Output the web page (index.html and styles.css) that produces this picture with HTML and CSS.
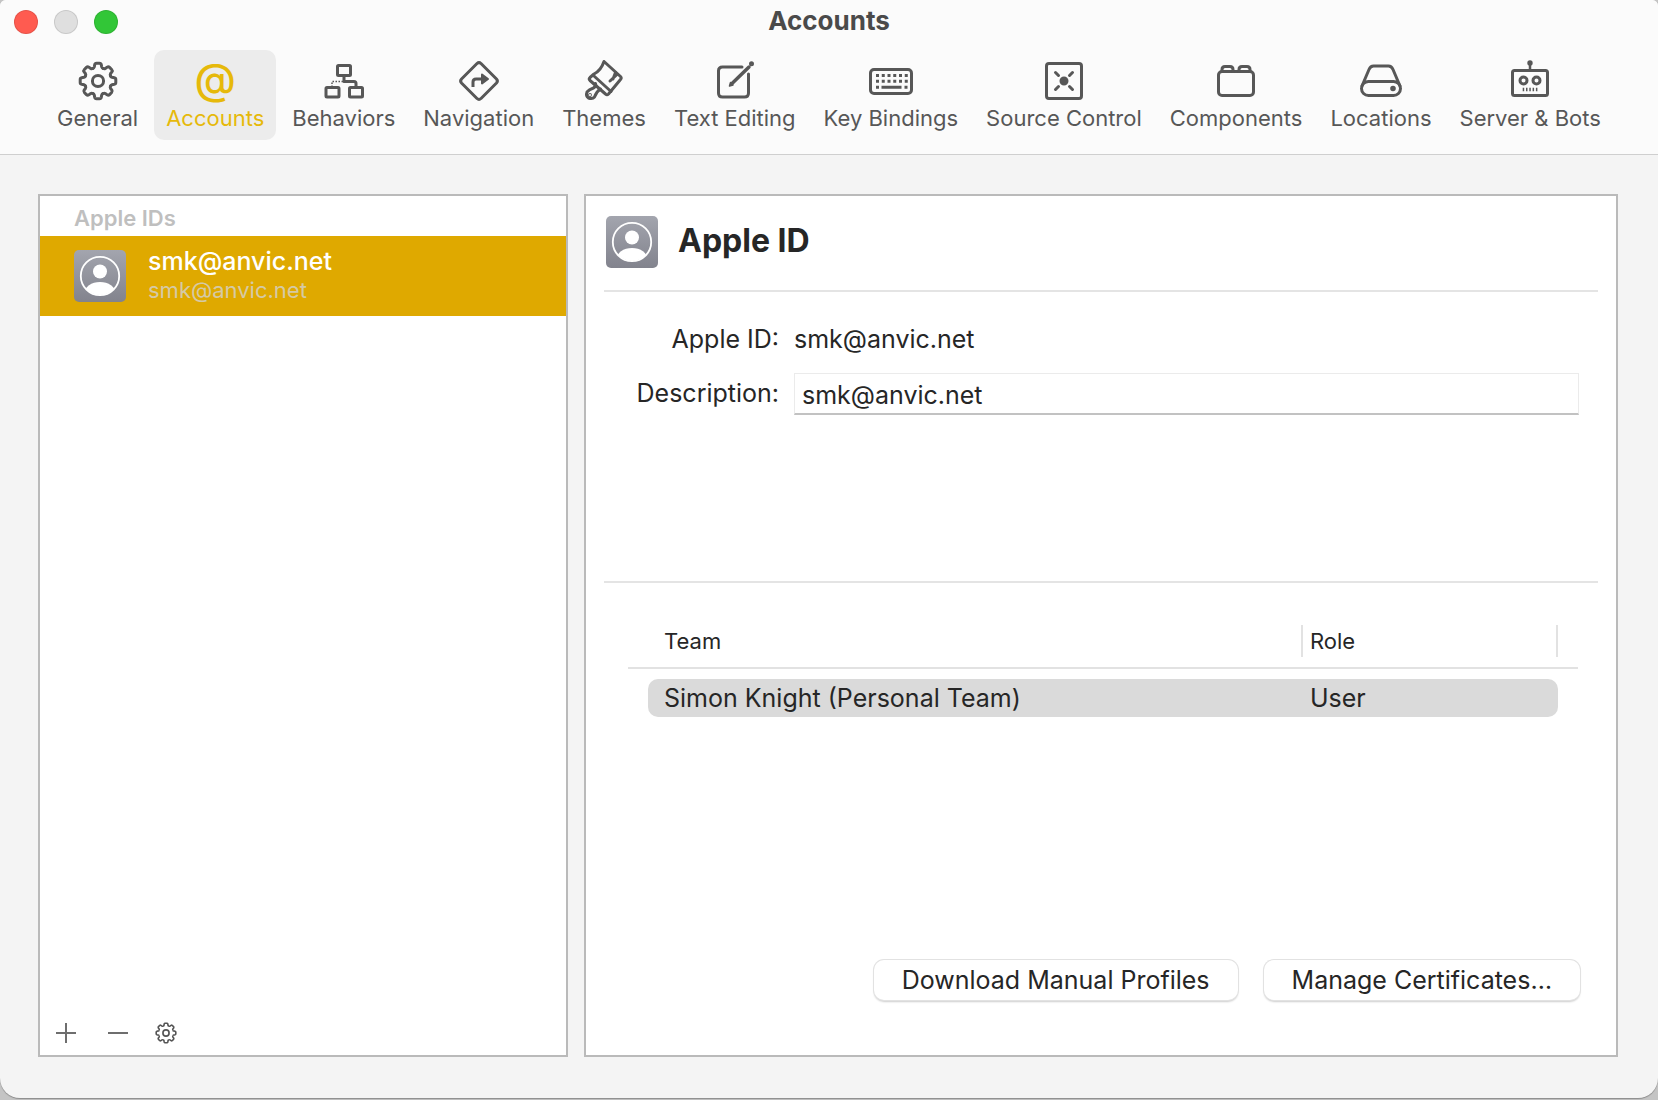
FILE: index.html
```html
<!DOCTYPE html>
<html lang="en">
<head>
<meta charset="utf-8">
<meta name="viewport" content="width=device-width, initial-scale=1">
<title>Accounts</title>
<link rel="stylesheet" href="styles.css">
</head>
<body>
<svg class="defs" aria-hidden="true">
  <defs>
    <path id="tooth" d="M-5.2-12.5C-4.2-12.8-3.9-13.2-3.7-14L-3.3-16.3Q-3-17.8-1.5-17.8H1.5Q3-17.8 3.3-16.3L3.7-14C3.9-13.2 4.2-12.8 5.2-12.5"/>
    <g id="gear">
      <use href="#tooth"/><use href="#tooth" transform="rotate(45)"/><use href="#tooth" transform="rotate(90)"/><use href="#tooth" transform="rotate(135)"/>
      <use href="#tooth" transform="rotate(180)"/><use href="#tooth" transform="rotate(225)"/><use href="#tooth" transform="rotate(270)"/><use href="#tooth" transform="rotate(315)"/>
      <circle r="5.6"/>
    </g>
    <linearGradient id="avatar-fill" x1="0" y1="0" x2="0" y2="1"><stop offset="0" stop-color="#a3a5ae"/><stop offset="1" stop-color="#82838d"/></linearGradient>
    <clipPath id="avatar-clip"><circle cx="26" cy="26" r="19"/></clipPath>
    <symbol id="avatar" viewBox="0 0 52 52">
      <rect width="52" height="52" rx="5" fill="url(#avatar-fill)"/>
      <circle cx="26" cy="21.5" r="7" fill="#fff"/>
      <ellipse cx="26" cy="43" rx="15.5" ry="11" fill="#fff" clip-path="url(#avatar-clip)"/>
      <circle cx="26" cy="26" r="19.2" fill="none" stroke="#fff" stroke-width="1.8"/>
    </symbol>
  </defs>
</svg>
<div class="window">
  <header class="header">
    <div class="titlebar">
      <div class="lights">
        <button class="light close" aria-label="Close"></button>
        <button class="light minimize" aria-label="Minimize" disabled></button>
        <button class="light zoom" aria-label="Zoom"></button>
      </div>
      <h1 class="title">Accounts</h1>
    </div>
    <nav class="toolbar" aria-label="Preferences">
      <button class="tab">
        <svg class="icon" viewBox="-22 -22 44 44"><use href="#gear"/></svg>
        <span>General</span>
      </button>
      <button class="tab active" aria-current="page">
        <span class="icon at" aria-hidden="true">@</span>
        <span>Accounts</span>
      </button>
      <button class="tab">
        <svg class="icon" viewBox="0 0 44 44"><rect x="15.5" y="6.5" width="13" height="10" rx="1"/><rect x="4" y="28.500" width="13" height="9.500" rx="1"/><rect x="27.500" y="28.500" width="13" height="9.500" rx="1"/><path d="M22 17v5.500h10q2 0 2 2v4"/><path d="M21 22.500H10v5" stroke-width="1.500" stroke-dasharray="1.500 1.500" stroke-linecap="butt"/></svg>
        <span>Behaviors</span>
      </button>
      <button class="tab">
        <svg class="icon" viewBox="0 0 44 44"><path d="M20 4.500q2-1.800 4 0L39.500 20q1.800 2 0 4L24 39.500q-2 1.800-4 0L4.500 24q-1.800-2 0-4Z"/><path d="M16 28v-5q0-3 3-3h7" stroke-linecap="butt"/><path d="M25 15.500 31 20l-6 4.500Z" class="solid" stroke-width="2"/></svg>
        <span>Navigation</span>
      </button>
      <button class="tab">
        <svg class="icon" viewBox="0 0 44 44"><path d="M22 2.500 38.500 17.500q1.500 1.500 0 3L26.500 35q-1.500 1.500-3 0L8 21.500q-1.500-1.500 0-3L12 15Q19 11.500 22 2.500Z"/><path d="M12 17l17 15.500M28 22l7-6.500M31 20l2.500-6.500"/><path d="M13.500 24.500q1 2.500-2 4.500-4.500 1.500-6.500 4-1.500 4 1.500 6 4 1.500 6-1 2-5.500 6-8"/><circle cx="8" cy="36" r=".4"/></svg>
        <span>Themes</span>
      </button>
      <button class="tab">
        <svg class="icon" viewBox="0 0 44 44"><path d="M29 8H9.500q-4 0-4 4v22q0 4 4 4h22q4 0 4-4V15"/><path d="M19 24.500 36 8" stroke-width="3.500"/><path d="m16.500 27 1-3.500 2.500 2.500Z" class="solid" stroke-width="1.500"/><circle cx="38.500" cy="4.800" r="1" class="solid"/></svg>
        <span>Text Editing</span>
      </button>
      <button class="tab">
        <svg class="icon" viewBox="0 0 44 44"><rect x="1.500" y="10.500" width="41" height="24" rx="3.500"/><path d="M7 16.500h32M7 22.300h32" stroke-dasharray="3 2.750" stroke-width="3" stroke-linecap="butt"/><path d="M7 28.200h3M12.500 28.200h20M35.500 28.200h3" stroke-width="3" stroke-linecap="butt"/></svg>
        <span>Key Bindings</span>
      </button>
      <button class="tab">
        <svg class="icon" viewBox="0 0 44 44"><rect x="4.500" y="4.500" width="35" height="35" rx="2.500"/><circle cx="22" cy="22" r="3" class="solid"/><path d="m13.500 13.500 3 3M30.500 13.500l-3 3M13.500 30.500l3-3M30.500 30.500l-3-3"/></svg>
        <span>Source Control</span>
      </button>
      <button class="tab">
        <svg class="icon" viewBox="0 0 44 44"><rect x="4.500" y="12.500" width="35" height="24" rx="3.500"/><path d="M8 12V10.500q0-3 3-3h5q3 0 3 3V12M25 12V10.500q0-3 3-3h5q3 0 3 3V12"/></svg>
        <span>Components</span>
      </button>
      <button class="tab">
        <svg class="icon" viewBox="0 0 44 44"><path d="m3 27 7-16.500q1.500-3.500 4.500-3.500h15q3 0 4.500 3.500L41 27"/><rect x="2.500" y="22.500" width="39" height="14" rx="7"/><circle cx="34" cy="29.500" r="1.300" class="solid"/></svg>
        <span>Locations</span>
      </button>
      <button class="tab">
        <svg class="icon" viewBox="0 0 44 44"><rect x="4.500" y="11.500" width="35" height="25" rx="2"/><path d="M22 11V5" stroke-width="2.500"/><circle cx="22" cy="4" r="1.200" class="solid"/><circle cx="15.500" cy="21.500" r="3.500"/><circle cx="28.500" cy="21.500" r="3.500"/><path d="M14.700 30.500h15.500" stroke-width="3.500" stroke-dasharray="1.500 1.800" stroke-linecap="butt"/></svg>
        <span>Server &amp; Bots</span>
      </button>
    </nav>
  </header>
  <main class="content">
    <aside class="panel sidebar">
      <h2 class="group">Apple IDs</h2>
      <button class="account">
        <svg class="avatar" aria-hidden="true"><use href="#avatar"/></svg>
        <span class="account-text">
          <span class="account-name">smk@anvic.net</span>
          <span class="account-sub">smk@anvic.net</span>
        </span>
      </button>
      <div class="actions">
        <button class="action" aria-label="Add account"><svg viewBox="0 0 22 22"><path d="M11 1v20M1 11h20"/></svg></button>
        <button class="action" aria-label="Remove account"><svg viewBox="0 0 22 22"><path d="M1 11h20"/></svg></button>
        <button class="action gear" aria-label="Account options"><svg viewBox="-20 -20 40 40"><use href="#gear"/></svg></button>
      </div>
    </aside>
    <section class="panel detail">
      <div class="detail-head">
        <svg class="avatar" aria-hidden="true"><use href="#avatar"/></svg>
        <h2 class="detail-title">Apple ID</h2>
      </div>
      <div class="form">
        <span class="label">Apple ID:</span>
        <span>smk@anvic.net</span>
        <label class="label" for="description">Description:</label>
        <input id="description" class="field" type="text" value="smk@anvic.net">
      </div>
      <table class="teams">
        <thead>
          <tr><th scope="col" class="team"><span>Team</span></th><th scope="col" class="role"><span>Role</span></th></tr>
        </thead>
        <tbody>
          <tr><td class="team"><span>Simon Knight (Personal Team)</span></td><td class="role"><span>User</span></td></tr>
        </tbody>
      </table>
      <div class="buttons">
        <button class="push">Download Manual Profiles</button>
        <button class="push">Manage Certificates…</button>
      </div>
    </section>
  </main>
</div>
</body>
</html>
```
FILE: styles.css
```css
* { box-sizing: border-box; }

body {
  margin: 0;
  min-height: 100vh;
  display: flex;
  background: #c4c4c4;
  font-family: Inter, "Liberation Sans", sans-serif;
  font-size: 25px;
  line-height: 32px;
  color: #262626;
}

button, input { font: inherit; color: inherit; margin: 0; }
button { border: 0; padding: 0; background: none; }
h1, h2 { margin: 0; }
.defs { position: absolute; width: 0; height: 0; }

.window {
  flex: 1;
  display: flex;
  flex-direction: column;
  margin-bottom: 2px;
  border-radius: 6px 6px 20px 20px;
  background: #f4f4f4;
  box-shadow: 0 1px 1px #8c8c8c;
  overflow: hidden;
}

/* Title bar and toolbar */
.header {
  background: #fbfbfb;
  border-bottom: 1px solid #cfcfcf;
}
.titlebar {
  display: grid;
  grid-template-columns: 1fr auto 1fr;
  align-items: center;
  height: 44px;
  padding: 0 14px;
}
.lights { display: flex; gap: 16px; }
.light {
  width: 24px;
  height: 24px;
  border-radius: 50%;
  border: 1px solid #0000001a;
}
.close { background: #ff5b50; }
.minimize { background: #dfdfdf; }
.zoom { background: #32c637; }
.title {
  padding-bottom: 2px;
  font-size: 26px;
  font-weight: 700;
  color: #4a4a4a;
}
.toolbar {
  display: flex;
  justify-content: center;
  gap: 4px;
  padding: 6px 0 14px;
}
.tab {
  display: flex;
  flex-direction: column;
  align-items: center;
  gap: 1px;
  height: 90px;
  padding: 9px 12px 0;
  border-radius: 10px;
  font-size: 22px;
  line-height: 28px;
  color: #575757;
  white-space: nowrap;
}
.active { background: #ececec; color: #e6b90a; }
.icon {
  width: 44px;
  height: 44px;
  overflow: visible;
  fill: none;
  stroke: currentColor;
  stroke-width: 3;
  stroke-linecap: round;
  stroke-linejoin: round;
}
.solid { fill: currentColor; }
.at { font-size: 42px; line-height: 40px; font-weight: 500; text-align: center; }

/* Panels */
.content {
  flex: 1;
  display: grid;
  grid-template-columns: 530px 1fr;
  gap: 16px;
  padding: 39px 40px 41px 38px;
}
.panel {
  display: flex;
  flex-direction: column;
  background: #fff;
  border: 2px solid #bababa;
}
.avatar { width: 52px; height: 52px; flex: none; }

/* Account list */
.group {
  padding: 8px 34px 4px;
  font-size: 22px;
  line-height: 28px;
  font-weight: 600;
  color: #bfbfbf;
}
.account {
  display: flex;
  align-items: center;
  gap: 22px;
  height: 80px;
  padding: 0 34px;
  background: #dfa900;
  text-align: left;
}
.account-text { display: flex; flex-direction: column; padding-bottom: 2px; }
.account-name { line-height: 30px; font-weight: 500; color: #fff; }
.account-sub { font-size: 22px; line-height: 28px; color: #d5c9a5; }
.actions {
  display: flex;
  align-items: center;
  gap: 30px;
  margin-top: auto;
  padding: 0 15px 11px;
}
.action { display: flex; }
.action svg {
  width: 22px;
  height: 22px;
  fill: none;
  stroke: #6e6e6e;
  stroke-width: 2;
  overflow: visible;
}
.gear { margin-left: -4px; }
.action.gear svg { stroke: #555; stroke-width: 3; }

/* Account detail */
.detail { padding: 20px 18px 0; }
.detail-head {
  display: flex;
  align-items: center;
  gap: 20px;
  height: 76px;
  padding: 0 2px 22px;
  border-bottom: 2px solid #e4e4e4;
}
.detail-title { padding-bottom: 3px; font-size: 32px; font-weight: 700; }
.form {
  display: grid;
  grid-template-columns: 175px 1fr;
  align-content: start;
  align-items: start;
  gap: 18px 15px;
  height: 291px;
  padding: 31px 19px 0 0;
  border-bottom: 2px solid #e4e4e4;
}
.label { text-align: right; white-space: nowrap; }
label.label { padding-top: 4px; }
.field {
  width: 100%;
  height: 42px;
  padding: 2px 7px 0;
  border: 1px solid #ebebeb;
  border-bottom: 2px solid #c2c2c2;
  background: #fff;
}
.teams {
  margin: 42px 20px 0 24px;
  border-collapse: separate;
  border-spacing: 0;
  table-layout: fixed;
}
.teams th, .teams td { padding: 0; text-align: left; font-weight: 400; }
.teams span { display: block; }
.teams .role { width: 275px; }
.teams th { padding-bottom: 10px; border-bottom: 2px solid #e2e2e2; font-size: 22px; }
.teams th span { padding: 0 7px; border-right: 2px solid #e2e2e2; }
.teams th.team span { padding-left: 36px; }
.teams .role span { margin-right: 20px; }
.teams td { padding-top: 10px; }
.teams td span { padding: 3px 7px; background: #dadada; }
.teams td.team span { margin-left: 20px; padding-left: 16px; border-radius: 10px 0 0 10px; }
.teams td.role span { border-radius: 0 10px 10px 0; }
.buttons {
  display: flex;
  justify-content: flex-end;
  gap: 26px;
  margin: auto 18px 55px;
}
.push {
  height: 40px;
  padding: 0 28px;
  border-radius: 10px;
  background: #fff;
  box-shadow: 0 0 0 1px #e2e2e2, 0 2px 2px #00000033;
}
```
